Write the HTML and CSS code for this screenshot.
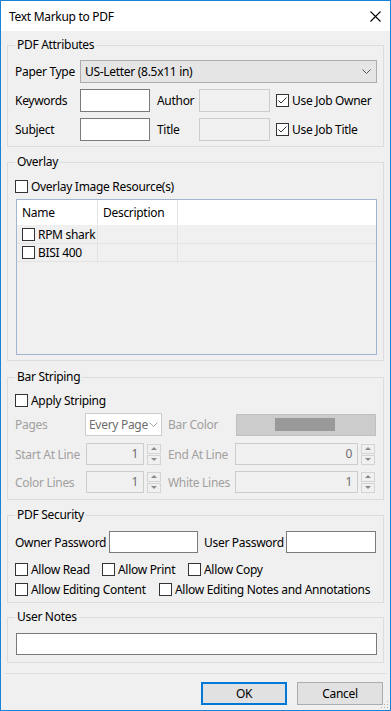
FILE: index.html
```html
<!DOCTYPE html>
<html lang="en">
<head>
    <meta charset="UTF-8">
    <meta name="viewport" content="width=device-width, initial-scale=1.0">
    <title>Text Markup to PDF</title>
    <link rel="stylesheet" href="styles.css">
</head>
<body>

<div class="window">
    <div class="titlebar">
        <span class="title">Text Markup to PDF</span>
        <svg class="close" width="11" height="11" viewBox="0 0 11 11"><path d="M0.5 0.5 L10.5 10.5 M10.5 0.5 L0.5 10.5" stroke="#000" stroke-width="1.1" fill="none"/></svg>
    </div>

    <div class="content">
        <fieldset class="group attrs">
            <legend>PDF Attributes</legend>
            <div class="row">
                <span class="lbl w65">Paper Type</span>
                <div class="select paper">
                    <span>US-Letter (8.5x11 in)</span>
                    <svg width="9" height="5" viewBox="0 0 9 5"><path d="M0.5 0.5 L4.5 4.5 L8.5 0.5" stroke="#555" fill="none"/></svg>
                </div>
            </div>
            <div class="row">
                <span class="lbl w65">Keywords</span>
                <div class="input w70"></div>
                <span class="lbl author">Author</span>
                <div class="input off w71"></div>
                <span class="check job"><span class="cb"><svg width="11" height="11" viewBox="0 0 11 11"><path d="M1.5 5.5 L4 8 L9.5 2.5" stroke="#333" fill="none"/></svg></span>Use Job Owner</span>
            </div>
            <div class="row">
                <span class="lbl w65">Subject</span>
                <div class="input w70"></div>
                <span class="lbl author">Title</span>
                <div class="input off w71"></div>
                <span class="check job"><span class="cb"><svg width="11" height="11" viewBox="0 0 11 11"><path d="M1.5 5.5 L4 8 L9.5 2.5" stroke="#333" fill="none"/></svg></span>Use Job Title</span>
            </div>
        </fieldset>

        <fieldset class="group overlay">
            <legend>Overlay</legend>
            <div class="cbrow">
                <span class="check"><span class="cb"></span>Overlay Image Resource(s)</span>
            </div>
            <div class="list">
                <div class="list-head">
                    <div class="cell name">Name</div>
                    <div class="cell">Description</div>
                </div>
                <div class="list-row">
                    <div class="cell name"><span class="check"><span class="cb"></span>RPM shark</span></div>
                    <div class="cell"></div>
                </div>
                <div class="list-row short">
                    <div class="cell name"><span class="check"><span class="cb"></span>BISI 400</span></div>
                    <div class="cell"></div>
                </div>
            </div>
        </fieldset>

        <fieldset class="group striping">
            <legend>Bar Striping</legend>
            <div class="cbrow">
                <span class="check"><span class="cb"></span>Apply Striping</span>
            </div>
            <div class="row first">
                <span class="lbl dim w70">Pages</span>
                <div class="select pages">
                    <span class="clip">Every Page</span>
                    <svg width="9" height="5" viewBox="0 0 9 5"><path d="M0.5 0.5 L4.5 4.5 L8.5 0.5" stroke="#a8a8a8" fill="none"/></svg>
                </div>
                <span class="lbl dim barlbl">Bar Color</span>
                <div class="colorbtn"><span class="swatch"></span></div>
            </div>
            <div class="row num">
                <span class="lbl dim w71">Start At Line</span>
                <div class="input off value w58">1</div>
                <div class="spin"><span><i class="up"></i></span><span><i class="down"></i></span></div>
                <span class="lbl dim endlbl">End At Line</span>
                <div class="input off value w123">0</div>
                <div class="spin"><span><i class="up"></i></span><span><i class="down"></i></span></div>
            </div>
            <div class="row num">
                <span class="lbl dim w71">Color Lines</span>
                <div class="input off value w58">1</div>
                <div class="spin"><span><i class="up"></i></span><span><i class="down"></i></span></div>
                <span class="lbl dim endlbl">White Lines</span>
                <div class="input off value w123">1</div>
                <div class="spin"><span><i class="up"></i></span><span><i class="down"></i></span></div>
            </div>
        </fieldset>

        <fieldset class="group security">
            <legend>PDF Security</legend>
            <div class="row pw">
                <span class="lbl w94">Owner Password</span>
                <div class="input w89"></div>
                <span class="lbl userpw">User Password</span>
                <div class="input w90"></div>
            </div>
            <div class="cbrow perms">
                <span class="check w87"><span class="cb"></span>Allow Read</span>
                <span class="check w86"><span class="cb"></span>Allow Print</span>
                <span class="check"><span class="cb"></span>Allow Copy</span>
            </div>
            <div class="cbrow perms2">
                <span class="check w144"><span class="cb"></span>Allow Editing Content</span>
                <span class="check"><span class="cb"></span>Allow Editing Notes and Annotations</span>
            </div>
        </fieldset>

        <fieldset class="group notes">
            <legend>User Notes</legend>
            <div class="input notes-input"></div>
        </fieldset>

        <div class="separator"></div>

        <div class="buttons">
            <div class="btn default">OK</div>
            <div class="btn">Cancel</div>
        </div>
    </div>

    <svg class="grip" width="8" height="8" viewBox="0 0 8 8">
        <rect x="6" y="0" width="1" height="1" fill="#b0b0b0"/>
        <rect x="3" y="3" width="1" height="1" fill="#b0b0b0"/>
        <rect x="6" y="3" width="1" height="1" fill="#b0b0b0"/>
        <rect x="0" y="6" width="1" height="1" fill="#b0b0b0"/>
        <rect x="3" y="6" width="1" height="1" fill="#b0b0b0"/>
        <rect x="6" y="6" width="1" height="1" fill="#b0b0b0"/>
    </svg>
</div>

</body>
</html>
```

FILE: styles.css
```css
body {
    margin: 0;
    font-family: "Noto Sans", "Open Sans", sans-serif;
    font-size: 12px;
    letter-spacing: -0.3px;
    color: #000;
    background: #fff;
}
.window {
    position: relative;
    width: 391px;
    height: 711px;
    box-sizing: border-box;
    border: 1px solid #1883d7;
    background: #f0f0f0;
    display: flex;
    flex-direction: column;
}
.titlebar {
    height: 30px;
    flex: none;
    background: #fff;
    display: flex;
    align-items: center;
    padding: 0 9px 0 8px;
}
.title {
    flex: 1;
    font-size: 12px;
}
.close {
    margin-top: 1px;
}
.content {
    padding: 0 6px;
    display: flex;
    flex-direction: column;
}
.group {
    margin: 0;
    min-width: 0;
    border: 1px solid #dcdcdc;
    padding: 0 6px 0 7px;
}
.group legend {
    padding: 0 2px;
    line-height: 16px;
}
.row {
    display: flex;
    align-items: center;
    height: 23px;
    white-space: nowrap;
}
.cbrow {
    display: flex;
    align-items: center;
    height: 17px;
}
.lbl {
    flex: none;
}
.dim {
    color: #a0a0a0;
}
.w65 { width: 65px; }
.w70 { width: 70px; }
.w71 { width: 71px; }
.w58 { width: 58px; }
.w123 { width: 123px; }
.w94 { width: 94px; }
.w89 { width: 89px; }
.w90 { width: 90px; }
.w87 { width: 87px; }
.w86 { width: 86px; }
.w144 { width: 144px; }

.input {
    flex: none;
    height: 23px;
    box-sizing: border-box;
    border: 1px solid #7a7a7a;
    background: #fff;
}
.input.off {
    border-color: #cccccc;
    background: #f0f0f0;
}
.input.value {
    height: 22px;
    text-align: right;
    padding-right: 5px;
    line-height: 20px;
    color: #6d6d6d;
}
.select {
    flex: none;
    height: 23px;
    box-sizing: border-box;
    display: flex;
    align-items: center;
    justify-content: space-between;
    padding: 0 4px 0 4px;
}
.select.paper {
    width: 297px;
    background: #e5e5e5;
    border: 1px solid #adadad;
}
.select.paper svg {
    margin-right: 1px;
}
.select.pages {
    width: 77px;
    background: #fff;
    border: 1px solid #cccccc;
    color: #6d6d6d;
    padding: 0 3px 0 3px;
}
.clip {
    white-space: nowrap;
    background: #fff;
}
.check {
    display: flex;
    align-items: center;
    gap: 3px;
    white-space: nowrap;
    flex: none;
}
.cb {
    width: 13px;
    height: 13px;
    box-sizing: border-box;
    border: 1px solid #333;
    background: #fff;
    flex: none;
    display: flex;
}

/* PDF Attributes */
.attrs {
    margin-top: 6px;
    padding-top: 7px;
    padding-bottom: 5px;
}
.attrs .row + .row {
    margin-top: 6px;
}
.author {
    width: 42px;
    margin-left: 7px;
}
.job {
    margin-left: 6px;
}

/* Overlay */
.overlay {
    margin-top: 7px;
    padding-top: 8px;
    padding-bottom: 5px;
}
.list {
    margin: 4px 0 0 1px;
    height: 156px;
    box-sizing: border-box;
    border: 1px solid #a3b5cc;
    background: #f0f0f0;
}
.list-head {
    display: flex;
    height: 25px;
    background: #fff;
}
.list-row {
    display: flex;
    height: 19px;
    box-sizing: border-box;
    border-bottom: 1px solid #e3e3e3;
}
.list-row.short {
    height: 18px;
}
.cell {
    width: 80px;
    box-sizing: border-box;
    border-right: 1px solid #e3e3e3;
    padding-left: 5px;
    display: flex;
    align-items: center;
}
.cell.name {
    width: 81px;
}

/* Bar Striping */
.striping {
    margin-top: 8px;
    padding-top: 7px;
    padding-bottom: 6px;
}
.striping .first {
    margin-top: 4px;
}
.striping .num {
    height: 22px;
    margin-top: 7px;
}
.striping .num + .num {
    margin-top: 6px;
}
.barlbl {
    width: 68px;
    margin-left: 6px;
}
.colorbtn {
    flex: none;
    width: 140px;
    height: 22px;
    box-sizing: border-box;
    border: 1px solid #bfbfbf;
    background: #cccccc;
    display: flex;
    align-items: center;
    justify-content: center;
}
.swatch {
    width: 60px;
    height: 13px;
    background: #999999;
    margin-right: 2px;
}
.endlbl {
    width: 67px;
    margin-left: 7px;
}
.spin {
    flex: none;
    width: 14px;
    height: 21px;
    margin-left: 3px;
    display: flex;
    flex-direction: column;
    gap: 1px;
}
.spin span {
    flex: 1;
    box-sizing: border-box;
    border: 1px solid #d4d4d4;
    background: #f0f0f0;
    display: flex;
    align-items: center;
    justify-content: center;
}
.spin i {
    width: 0;
    height: 0;
    border-left: 3px solid transparent;
    border-right: 3px solid transparent;
}
.spin .up {
    border-bottom: 3px solid #8a8a8a;
}
.spin .down {
    border-top: 3px solid #8a8a8a;
}

/* PDF Security */
.security {
    margin-top: 7px;
    padding-top: 8px;
    padding-bottom: 4px;
}
.security .pw {
    height: 22px;
}
.security .pw .input {
    height: 22px;
}
.userpw {
    width: 82px;
    margin-left: 6px;
}
.perms {
    margin-top: 8px;
}
.perms2 {
    margin-top: 3px;
}

/* User Notes */
.notes {
    margin-top: 6px;
    padding-top: 8px;
    padding-bottom: 7px;
}
.notes-input {
    height: 22px;
    margin-left: 1px;
}

.separator {
    height: 1px;
    background: #dfdfdf;
    margin: 10px -3px 0 -3px;
}
.buttons {
    display: flex;
    justify-content: flex-end;
    gap: 10px;
    margin-top: 8px;
    padding-right: 1px;
}
.btn {
    width: 86px;
    height: 23px;
    box-sizing: border-box;
    border: 1px solid #adadad;
    background: #e1e1e1;
    display: flex;
    align-items: center;
    justify-content: center;
}
.btn.default {
    border: 2px solid #0078d7;
}
.grip {
    position: absolute;
    right: 1px;
    bottom: 1px;
}
```
